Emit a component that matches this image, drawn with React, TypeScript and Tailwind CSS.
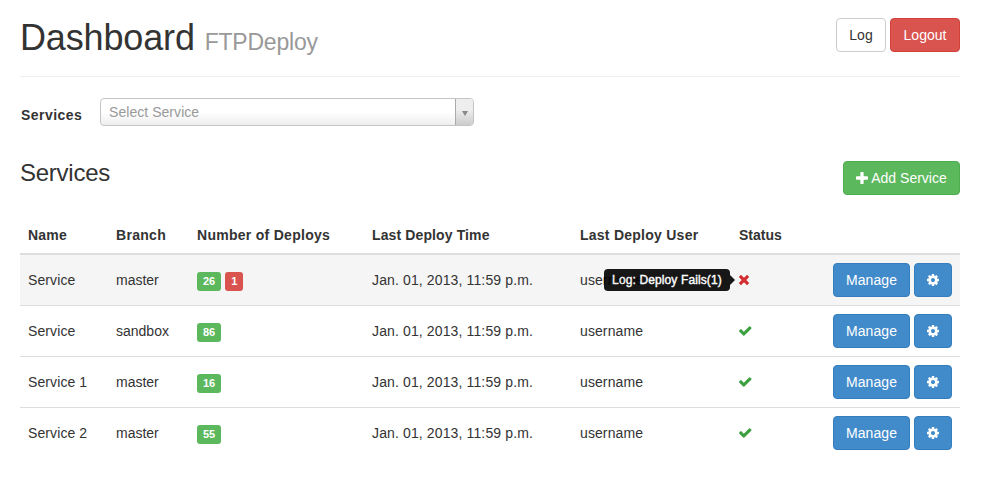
import React from "react";

type Row = { name: string; branch: string; ok: number; bad?: number };

const rows: Row[] = [
  { name: "Service", branch: "master", ok: 26, bad: 1 },
  { name: "Service", branch: "sandbox", ok: 86 },
  { name: "Service 1", branch: "master", ok: 16 },
  { name: "Service 2", branch: "master", ok: 55 },
];

const cols = "grid grid-cols-[88px_81px_175px_208px_159px_1fr_auto] px-2";

const icons = {
  plus: "M1600 736v192q0 40-28 68t-68 28h-416v416q0 40-28 68t-68 28h-192q-40 0-68-28t-28-68v-416h-416q-40 0-68-28t-28-68v-192q0-40 28-68t68-28h416v-416q0-40 28-68t68-28h192q40 0 68 28t28 68v416h416q40 0 68 28t28 68z",
  times: "M1490 1322q0 40-28 68l-136 136q-28 28-68 28t-68-28l-294-294-294 294q-28 28-68 28t-68-28l-136-136q-28-28-28-68t28-68l294-294-294-294q-28-28-28-68t28-68l136-136q28-28 68-28t68 28l294 294 294-294q28-28 68-28t68 28l136 136q28 28 28 68t-28 68l-294 294 294 294q28 28 28 68z",
  check: "M1671 566q0 40-28 68l-724 724-136 136q-28 28-68 28t-68-28l-136-136-362-362q-28-28-28-68t28-68l136-136q28-28 68-28t68 28l294 295 656-657q28-28 68-28t68 28l136 136q28 28 28 68z",
  cog: "M1152 896q0-106-75-181t-181-75-181 75-75 181 75 181 181 75 181-75 75-181zm512-109v222q0 12-8 23t-20 13l-185 28q-19 54-39 91 35 50 107 138 10 12 10 25t-9 23q-27 37-99 108t-94 71q-12 0-26-9l-138-108q-44 23-91 38-16 136-29 186-7 28-36 28h-222q-14 0-24.5-8.5t-11.5-21.5l-28-184q-49-16-90-37l-141 107q-10 9-25 9-14 0-25-11-126-114-165-168-7-10-7-23 0-12 8-23 15-21 51-66.5t54-70.5q-27-50-41-99l-183-27q-13-2-21-12.5t-8-23.5v-222q0-12 8-23t19-13l186-28q14-46 39-92-40-57-107-138-10-12-10-24 0-10 9-23 26-36 98.500-107.5t94.500-71.500q13 0 26 10l138 107q44-23 91-38 16-136 29-186 7-28 36-28h222q14 0 24.500 8.500t11.500 21.500l28 184q49 16 90 37l142-107q9-9 24-9 13 0 25 10 129 119 165 170 7 8 7 22 0 12-8 23-15 21-51 66.500t-54 70.500q26 50 41 98l183 28q13 2 21 12.500t8 23.500z",
};

function Icon({ name, box, className }: { name: keyof typeof icons; box: string; className: string }) {
  return (
    <svg viewBox={box} className={className} fill="currentColor" aria-hidden="true">
      <path d={icons[name]} />
    </svg>
  );
}

function Badge({ n, color }: { n: number; color: string }) {
  return (
    <span className={`${color} flex h-[19px] items-center rounded-[3px] px-1.5 text-[11px] font-bold text-white`}>{n}</span>
  );
}

function Tooltip() {
  return (
    <div className="absolute top-1/2 right-[calc(100%+4px)] flex -translate-y-1/2 items-center opacity-90">
      <div className="flex h-[22px] w-[126px] items-center justify-center rounded bg-black text-xs tracking-[0.12px] whitespace-nowrap text-white [-webkit-text-stroke:0.4px_white]">
        Log: Deploy Fails(1)
      </div>
      <div className="border-y-[5px] border-l-[5px] border-y-transparent border-l-black" />
    </div>
  );
}

export default function App() {
  return (
    <div className="h-[477px] overflow-hidden bg-white pl-5 font-['Liberation_Sans',Arial,sans-serif] text-sm leading-5 text-[#333]">
      <div className="w-[940px]">
        <header className="flex h-[77px] items-start justify-between border-b border-[#eee]">
          <h1 className="mt-[18px] text-[36px] leading-[40px] tracking-[-0.15px]">
            Dashboard <small className="text-[23px] tracking-[-0.2px] text-[#999]">FTPDeploy</small>
          </h1>
          <div className="mt-[18px] flex gap-1">
            <button className="h-[34px] w-[50px] rounded border border-[#ccc] bg-white">Log</button>
            <button className="h-[34px] w-[70px] rounded border border-[#d43f3a] bg-[#d9534f] text-white">Logout</button>
          </div>
        </header>

        <div className="mt-[21px] flex h-7 items-start">
          <label className="w-20 pt-[7px] pl-px font-bold tracking-[0.45px]">Services</label>
          <div className="flex h-7 w-[374px] overflow-hidden rounded border border-[#c4c4c4] bg-linear-to-b from-white from-50% to-[#eee]">
            <span className="flex-1 pl-2 leading-[26px] tracking-[0.05px] text-[#999]">Select Service</span>
            <span className="flex w-[18px] items-center justify-center border-l border-[#aaa] bg-linear-to-b from-[#eee] from-40% to-[#ccc]">
              <span className="mt-0.5 border-x-[3px] border-t-[5px] border-x-transparent border-t-[#888]" />
            </span>
          </div>
        </div>

        <div className="mt-[35px] flex h-[34px] items-start justify-between">
          <h2 className="text-2xl leading-6 tracking-[-0.25px]">Services</h2>
          <button className="flex h-[34px] w-[117px] items-center justify-center gap-[3px] rounded border border-[#4cae4c] bg-[#5cb85c] text-white">
            <Icon name="plus" box="192 128 1408 1408" className="size-3" /> Add Service
          </button>
        </div>

        <div className="mt-[22px]">
          <div className={`${cols} h-[38px] items-center border-b-2 border-[#ddd] font-bold`}>
            <span className="tracking-[0.2px]">Name</span>
            <span className="tracking-[0.3px]">Branch</span>
            <span className="tracking-[0.28px]">Number of Deploys</span>
            <span className="tracking-[0.12px]">Last Deploy Time</span>
            <span className="tracking-[0.25px]">Last Deploy User</span>
            <span>Status</span>
          </div>
          {rows.map((r, i) => (
            <div key={i} className={`${cols} items-center border-[#ddd] ${i === 0 ? "bg-[#f5f5f5]" : ""} ${i < 3 ? "h-[51px] border-b" : "h-[50px]"}`}>
              <span className="tracking-[0.1px]">{r.name}</span>
              <span>{r.branch}</span>
              <span className="mt-0.5 flex gap-1">
                <Badge n={r.ok} color="bg-[#5cb85c]" />
                {r.bad && <Badge n={r.bad} color="bg-[#d9534f]" />}
              </span>
              <span className="tracking-[0.13px]">Jan. 01, 2013, 11:59 p.m.</span>
              <span className="tracking-[0.1px]">username</span>
              <span className="flex">
                <span className="relative">
                  {r.bad ? (
                    <Icon name="times" box="302 366 1188 1188" className="h-[10px] w-[10px] text-[#d32f2f]" />
                  ) : (
                    <Icon name="check" box="121 334 1550 1188" className="h-[10px] w-[12.5px] text-[#3c9f40]" />
                  )}
                  {r.bad && <Tooltip />}
                </span>
              </span>
              <span className="flex gap-1">
                <button className="h-[34px] w-[77px] rounded border border-[#357ebd] bg-[#428bca] tracking-[0.1px] text-white">Manage</button>
                <button className="flex h-[34px] w-[38px] items-center justify-center rounded border border-[#357ebd] bg-[#428bca] text-white">
                  <Icon name="cog" box="128 128 1536 1536" className="size-3" />
                </button>
              </span>
            </div>
          ))}
        </div>
      </div>
    </div>
  );
}
